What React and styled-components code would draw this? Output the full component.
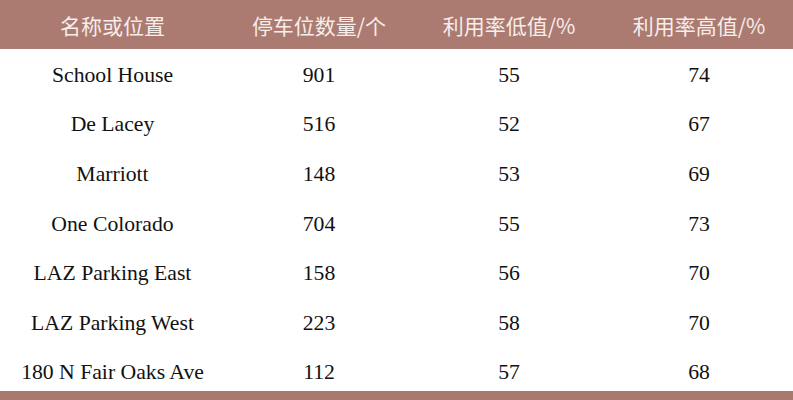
import React from "react";
import styled, { createGlobalStyle } from "styled-components";

const Global = createGlobalStyle`
  html, body {
    margin: 0;
    padding: 0;
    background: #ffffff;
  }
`;

const Table = styled.div`
  width: 793px;
  height: 400px;
  overflow: hidden;
  display: flex;
  flex-direction: column;
  background: #ffffff;
`;

const cols = "225px 188px 192px 188px";

const HeadRow = styled.div`
  display: grid;
  grid-template-columns: ${cols};
  height: 49px;
  background: #ab7b72;
  align-items: center;
`;

const HeadCell = styled.div`
  text-align: center;
  color: #f7ede9;
  font-family: "Noto Sans CJK SC", "Noto Sans", sans-serif;
  font-size: 21px;
  line-height: 1;
  padding-top: 1px;
`;

const Row = styled.div`
  display: grid;
  grid-template-columns: ${cols};
  height: ${(p) => (p.$last ? "44px" : "49.6px")};
  align-items: ${(p) => (p.$last ? "start" : "center")};
  padding-top: ${(p) => (p.$last ? "12px" : "2px")};
  box-sizing: border-box;
`;

const Cell = styled.div`
  text-align: center;
  color: #111111;
  font-family: "Liberation Serif", "Times New Roman", serif;
  font-size: 21.7px;
  line-height: 1.2;
  white-space: nowrap;
`;

const Footer = styled.div`
  height: 9px;
  background: #a8796f;
  flex-shrink: 0;
`;

const headers = ["名称或位置", "停车位数量/个", "利用率低值/%", "利用率高值/%"];

const rows = [
  ["School House", 901, 55, 74],
  ["De Lacey", 516, 52, 67],
  ["Marriott", 148, 53, 69],
  ["One Colorado", 704, 55, 73],
  ["LAZ Parking East", 158, 56, 70],
  ["LAZ Parking West", 223, 58, 70],
  ["180 N Fair Oaks Ave", 112, 57, 68],
];

export default function App() {
  return (
    <>
      <Global />
      <Table>
        <HeadRow>
          {headers.map((h) => (
            <HeadCell key={h}>{h}</HeadCell>
          ))}
        </HeadRow>
        {rows.map((r, i) => (
          <Row key={r[0]} $last={i === rows.length - 1}>
            {r.map((c, j) => (
              <Cell key={j}>{c}</Cell>
            ))}
          </Row>
        ))}
        <Footer />
      </Table>
    </>
  );
}
